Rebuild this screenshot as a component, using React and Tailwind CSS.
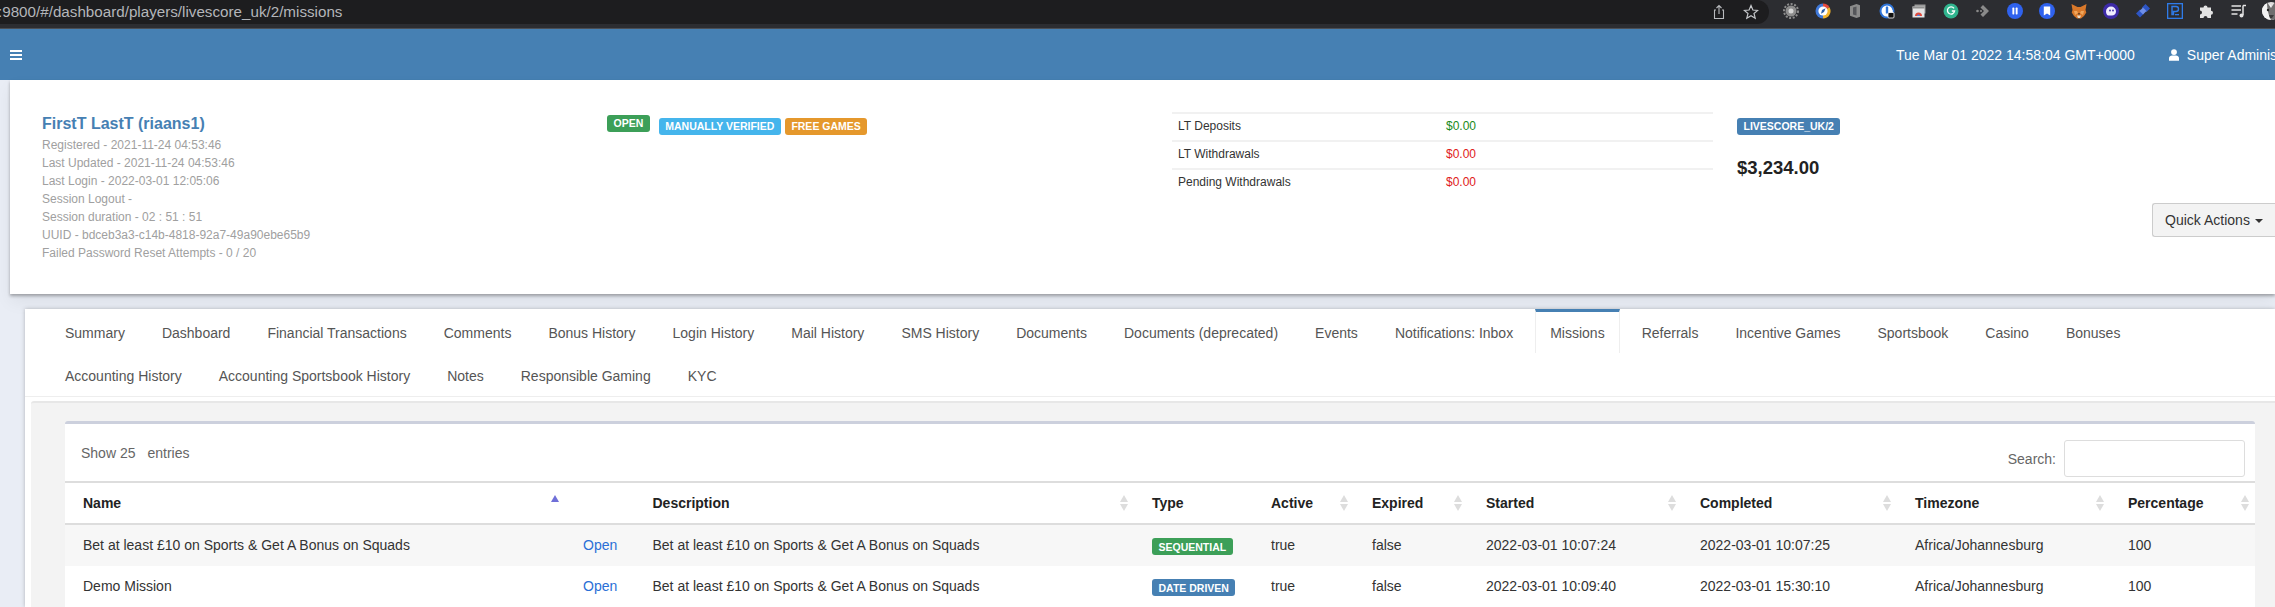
import React from 'react';

const details = [
  'Registered - 2021-11-24 04:53:46',
  'Last Updated - 2021-11-24 04:53:46',
  'Last Login - 2022-03-01 12:05:06',
  'Session Logout -',
  'Session duration - 02 : 51 : 51',
  'UUID - bdceb3a3-c14b-4818-92a7-49a90ebe65b9',
  'Failed Password Reset Attempts - 0 / 20',
];

const tabRows = [
  ['Summary', 'Dashboard', 'Financial Transactions', 'Comments', 'Bonus History', 'Login History', 'Mail History', 'SMS History', 'Documents', 'Documents (deprecated)', 'Events', 'Notifications: Inbox', 'Missions', 'Referrals', 'Incentive Games', 'Sportsbook', 'Casino', 'Bonuses'],
  ['Accounting History', 'Accounting Sportsbook History', 'Notes', 'Responsible Gaming', 'KYC'],
];

const columns = [
  { label: 'Name', width: 'w-[500px]', sort: 'asc' },
  { label: '', width: 'w-[69.5px]' },
  { label: 'Description', width: 'w-[499.5px]', sort: 'both' },
  { label: 'Type', width: 'w-[119px]' },
  { label: 'Active', width: 'w-[101px]', sort: 'both' },
  { label: 'Expired', width: 'w-[114px]', sort: 'both' },
  { label: 'Started', width: 'w-[214px]', sort: 'both' },
  { label: 'Completed', width: 'w-[215px]', sort: 'both' },
  { label: 'Timezone', width: 'w-[213px]', sort: 'both' },
  { label: 'Percentage', width: 'w-[145px]', sort: 'both' },
];

const missions = [
  { name: 'Bet at least £10 on Sports & Get A Bonus on Squads', type: 'SEQUENTIAL', typeColor: 'bg-[#3c9f58]', started: '2022-03-01 10:07:24', completed: '2022-03-01 10:07:25', bg: 'bg-[#f7f7f7]', height: 'h-[42px]' },
  { name: 'Demo Mission', type: 'DATE DRIVEN', typeColor: 'bg-[#4680b3]', started: '2022-03-01 10:09:40', completed: '2022-03-01 15:30:10', bg: 'bg-white', height: 'h-[41px]' },
];

const Label = ({ color, children }) => (
  <span className={`inline-flex h-[17px] items-center rounded-[3px] px-[6.5px] text-[10.5px] font-bold leading-none text-white ${color}`}>
    {children}
  </span>
);

const Icon = ({ children, className = '' }) => (
  <svg viewBox="0 0 16 16" className={`h-4 w-4 shrink-0 ${className}`}>{children}</svg>
);

// Browser toolbar extensions, 32px apart
const ExtensionIcons = () => (
  <div className="flex items-center">
    <div className="flex w-8 justify-center">
      <Icon>
        <circle cx="8" cy="8" r="5.5" fill="#8d8d8d" />
        <circle cx="8" cy="8" r="7" fill="none" stroke="#8d8d8d" strokeWidth="2" strokeDasharray="2 1.6" />
        <circle cx="8" cy="8" r="2.5" fill="#d5d5d5" />
      </Icon>
    </div>
    <div className="flex w-8 justify-center">
      <Icon>
        <path d="M8 0.5a7.5 7.5 0 0 1 6.5 3.75L8 8z" fill="#e34b3f" />
        <path d="M14.5 4.25A7.5 7.5 0 0 1 8 15.5V8z" fill="#f3b52d" />
        <path d="M8 15.5A7.5 7.5 0 0 1 8 0.5V8z" fill="#3f78d8" />
        <circle cx="8" cy="8" r="4.6" fill="#fff" />
        <path d="M10.6 5.2 9 9 6 10.8 7 7z" fill="#2b5fa8" />
      </Icon>
    </div>
    <div className="flex w-8 justify-center">
      <Icon>
        <path d="M3 3.2 9.5 1 13 2.2v11.6L9.5 15 3 12.8z" fill="#8b8b8b" />
        <path d="M6 4.5 9.5 3.5v9L6 11.5z" fill="#55565a" />
      </Icon>
    </div>
    <div className="flex w-8 justify-center">
      <Icon>
        <circle cx="8" cy="8" r="7.5" fill="#2f74d8" />
        <circle cx="8" cy="8" r="5.5" fill="#fff" />
        <rect x="6.8" y="3.5" width="2.4" height="7" rx="0.5" fill="#2f74d8" />
        <rect x="9" y="9.5" width="6" height="5.5" rx="1" fill="#111" stroke="#fff" strokeWidth="0.8" />
        <path d="M10.5 9.5V8.3a1.5 1.5 0 0 1 3 0v1.2" fill="none" stroke="#fff" strokeWidth="0.9" />
      </Icon>
    </div>
    <div className="flex w-8 justify-center">
      <Icon>
        <rect x="3.5" y="1.5" width="11" height="9" fill="#9a9a9a" />
        <rect x="1.5" y="3.5" width="12" height="11" fill="#e4e4e4" />
        <rect x="1.5" y="3.5" width="12" height="2" fill="#8f8f8f" />
        <path d="M4 13a3.5 3.5 0 0 1 7 0z" fill="#e0493c" />
        <path d="M6 13a1.5 1.5 0 0 1 3 0z" fill="#4a85e8" />
      </Icon>
    </div>
    <div className="flex w-8 justify-center">
      <Icon>
        <circle cx="8" cy="8" r="7.5" fill="#30b48e" />
        <path d="M11 5.4A3.6 3.6 0 1 0 11.6 8H8.8" fill="none" stroke="#fff" strokeWidth="1.3" />
      </Icon>
    </div>
    <div className="flex w-8 justify-center">
      <Icon>
        <path d="M8 2 14 8 8 14 5.5 11.5 9 8 5.5 4.5z" fill="#8a8a8a" />
        <circle cx="2.5" cy="8" r="1.3" fill="#8a8a8a" />
        <circle cx="6" cy="8" r="1.1" fill="#8a8a8a" />
      </Icon>
    </div>
    <div className="flex w-8 justify-center">
      <Icon>
        <circle cx="8" cy="8" r="8" fill="#2f62ee" />
        <rect x="5.4" y="4.6" width="1.9" height="6.8" rx="0.6" fill="#fff" />
        <rect x="8.7" y="4.6" width="1.9" height="6.8" rx="0.6" fill="#fff" />
      </Icon>
    </div>
    <div className="flex w-8 justify-center">
      <Icon>
        <circle cx="8" cy="8" r="8" fill="#2f62ee" />
        <path d="M4.8 3.5h6.4v9L8 10.4l-3.2 2.1z" fill="#fff" />
      </Icon>
    </div>
    <div className="flex w-8 justify-center">
      <Icon>
        <path d="M0.5 1 6.5 4h3l6-3-1 6 .8 2.5L13 13l-3 2.5H6L3 13 .7 9.5 1.5 7z" fill="#d9782a" />
        <path d="M3 8h3l1 2-3 2zM13 8h-3l-1 2 3 2z" fill="#efa65c" />
        <path d="M6 12.5h4L9 15H7z" fill="#e9dcc9" />
        <path d="M7 10h2l-1 2.5z" fill="#5b3a21" />
      </Icon>
    </div>
    <div className="flex w-8 justify-center">
      <Icon>
        <circle cx="8" cy="8" r="8" fill="#3d2aa8" />
        <path d="M3 8.5a5 5 0 0 1 10 0c0 2.5-2 4-4 4H5.5C4 12.5 3 10.5 3 8.5z" fill="#f1edff" />
        <circle cx="7" cy="7.5" r="0.9" fill="#3d2aa8" />
        <circle cx="10" cy="7.5" r="0.9" fill="#3d2aa8" />
      </Icon>
    </div>
    <div className="flex w-8 justify-center">
      <Icon>
        <path d="M1 10.5 5 6.5l4 4-4 4z" fill="#2d55c4" />
        <path d="M10.5 1 15 5.5 11.5 9 7 4.5z" fill="#2d55c4" />
        <rect x="5.5" y="5.5" width="5" height="5" transform="rotate(45 8 8)" fill="#6f8fe8" />
      </Icon>
    </div>
    <div className="flex w-8 justify-center">
      <Icon>
        <rect x="0.5" y="0.5" width="15" height="15" fill="none" stroke="#2f7be8" strokeWidth="1.6" />
        <path d="M5 3.5h4a2.5 2.5 0 0 1 0 5H6.5v3H5z" fill="none" stroke="#2f7be8" strokeWidth="1.4" />
        <rect x="8" y="11" width="4" height="1.3" fill="#2f7be8" />
      </Icon>
    </div>
    <div className="flex w-8 justify-center">
      <Icon>
        <path d="M1 4.5h3.500a2 2 0 1 1 4 0H12v3.300a2 2 0 1 1 0 4V15H8.500a2 2 0 1 0-4 0H1v-3.500a2 2 0 1 0 0-4z" fill="#e3e3e3" />
      </Icon>
    </div>
    <div className="flex w-8 justify-center">
      <Icon>
        <path d="M0.5 3h9.500M0.5 7h9.500M0.5 11h6" stroke="#e3e3e3" strokeWidth="1.5" />
        <path d="M12 2.500v9.500" stroke="#e3e3e3" strokeWidth="1.5" />
        <path d="M12 2.500h3" stroke="#e3e3e3" strokeWidth="1.5" />
        <circle cx="10.5" cy="12.5" r="2" fill="#e3e3e3" />
      </Icon>
    </div>
    <div className="ml-[7px] h-[18px] w-[18px] shrink-0 overflow-hidden rounded-full bg-[#dedede]">
      <svg viewBox="0 0 18 18" className="h-full w-full">
        <path d="M0 0 9 3 9 18H0z" fill="#f2f2f2" />
        <path d="M5 0 9 6 13 0v18H9C7 14 5 8 5 0z" fill="#6f6f6f" />
        <circle cx="6" cy="8" r="1.2" fill="#222" />
        <path d="M7 13h5l-2 3H8z" fill="#3a3a3a" />
      </svg>
    </div>
  </div>
);

const SortArrows = ({ sort }) => (
  <span className="absolute right-[6px] top-1/2 flex -translate-y-1/2 flex-col gap-[2px]">
    <span className={`h-0 w-0 border-x-[4px] border-b-[7px] border-x-transparent ${sort === 'asc' ? 'border-b-[#6f6fd8]' : 'border-b-[#dddddd]'}`} />
    <span className={`h-0 w-0 border-x-[4px] border-t-[7px] border-x-transparent ${sort === 'asc' ? 'border-t-transparent' : 'border-t-[#dddddd]'}`} />
  </span>
);

export default function App() {
  return (
    <div className="flex h-[607px] w-[2275px] flex-col overflow-hidden bg-[#e9edf5] font-['Liberation_Sans',Arial,sans-serif] text-sm text-[#333333]">
      {/* Browser chrome */}
      <div className="flex h-[29px] shrink-0 items-start border-b border-[#4b4f55] bg-[#2c2d31]">
        <div className="flex h-6 w-[1769px] shrink-0 items-center justify-between overflow-hidden rounded-r-full bg-[#1d1d1f] pr-[10px]">
          <span className="-ml-[2px] whitespace-nowrap text-[15.2px] text-[#b4b6ba]">:9800/#/dashboard/players/livescore_uk/2/missions</span>
          <div className="flex items-center gap-4">
            <Icon className="text-[#b9bbbe]">
              <path d="M5 6H3.500v8.500h9V6H11M8 10V1.500M5.500 4 8 1.500 10.500 4" fill="none" stroke="currentColor" strokeWidth="1.1" />
            </Icon>
            <Icon className="text-[#c4c6c9]">
              <path d="M8 1.500 9.900 6l4.800.4-3.700 3.100 1.200 4.700L8 11.700l-4.200 2.500L5 9.500 1.300 6.400 6.100 6z" fill="none" stroke="currentColor" strokeWidth="1.2" />
            </Icon>
          </div>
        </div>
        <div className="flex h-[21px] items-center pl-[6px]">
          <ExtensionIcons />
        </div>
      </div>

      {/* App header */}
      <header className="flex h-[51px] shrink-0 items-center bg-[#4680b3] text-white">
        <div className="ml-[10px] flex w-3 shrink-0 flex-col gap-[2px]">
          <span className="h-[2px] bg-white" />
          <span className="h-[2px] bg-white" />
          <span className="h-[2px] bg-white" />
        </div>
        <span className="ml-[1874px] shrink-0 whitespace-nowrap">Tue Mar 01 2022 14:58:04 GMT+0000</span>
        <svg viewBox="0 0 12 14" className="ml-[34px] h-[14px] w-[10px] shrink-0 fill-white">
          <circle cx="6" cy="3.5" r="3.5" />
          <path d="M0 14v-3c0-2.500 2-3.500 3.500-3.500h5C10 7.500 12 8.500 12 11v3z" />
        </svg>
        <span className="ml-[8px] shrink-0 whitespace-nowrap">Super Administrator</span>
      </header>

      {/* Player summary */}
      <section className="ml-[10px] flex h-[214px] shrink-0 bg-white pl-8 pt-8 shadow-[0_2px_3px_rgba(0,0,0,0.3),0_8px_16px_rgba(0,0,0,0.06)]">
        <div className="w-[565px] shrink-0 pt-[1px]">
          <h2 className="text-base font-bold leading-[22px] text-[#4680b3]">FirstT LastT (riaans1)</h2>
          <div className="mt-[1px] text-xs leading-[18px] text-[#a0a0a0]">
            {details.map((line) => (
              <div key={line}>{line}</div>
            ))}
          </div>
        </div>
        <div className="w-[565px] shrink-0 pt-[3px]">
          <div className="flex">
            <Label color="bg-[#3c9f58]">OPEN</Label>
            <span className="ml-[9px]"><Label color="bg-[#45b5ec]">MANUALLY VERIFIED</Label></span>
            <span className="ml-1"><Label color="bg-[#e5982c]">FREE GAMES</Label></span>
          </div>
        </div>
        <div className="w-[541px] shrink-0 text-xs">
          {[
            ['LT Deposits', '$0.00', 'text-[#1a8a1a]'],
            ['LT Withdrawals', '$0.00', 'text-[#e02020]'],
            ['Pending Withdrawals', '$0.00', 'text-[#e02020]'],
          ].map(([label, amount, color]) => (
            <div key={label} className="flex h-7 items-center border-t-2 border-[#f1f1f1] pb-[2px] pl-[6px]">
              <span className="w-[268px]">{label}</span>
              <span className={color}>{amount}</span>
            </div>
          ))}
        </div>
        <div className="ml-6 flex grow flex-col pt-[3px]">
          <div><Label color="bg-[#4680b3]">LIVESCORE_UK/2</Label></div>
          <div className="mt-[22px] text-[18.5px] font-bold leading-[22px] text-[#222222]">$3,234.00</div>
          <button className="ml-auto mt-[24px] flex h-[34px] w-[123px] items-center justify-center gap-[5px] rounded-l-[3px] border border-r-0 border-[#cccccc] bg-[#f3f3f3] text-[#333333]">
            Quick Actions
            <span className="mt-[2px] h-0 w-0 border-x-[4px] border-t-[4px] border-x-transparent border-t-[#333333]" />
          </button>
        </div>
      </section>

      {/* Tabs */}
      <div className="mt-[15px] grow">
        <div className="ml-[25px] flex h-full flex-col bg-white shadow-[0_0_4px_rgba(0,0,0,0.25)]">
          <div className="border-b border-[#eeeeee] px-[25px]">
            {tabRows.map((row, i) => (
              <ul key={i} className={`flex ${i === 0 ? 'h-[44px]' : 'h-[43px]'}`}>
                {row.map((tab) => (
                  <li
                    key={tab}
                    className={
                      tab === 'Missions'
                        ? 'mr-[7px] flex items-center border-x border-t-[3px] border-x-[#eeeeee] border-t-[#4680b3] px-[14px] text-[#555555]'
                        : 'mr-[7px] flex items-center border-t-[3px] border-transparent px-[15px] text-[#555555]'
                    }
                  >
                    {tab}
                  </li>
                ))}
              </ul>
            ))}
          </div>

          {/* Tab content */}
          <div className="ml-[6px] mt-1 grow rounded-tl-[3px] border-t-2 border-[#e7e7e7] bg-[#f3f3f3] pl-[34px] pr-[20px] pt-[18px]">
            <div className="rounded-t-[3px] border-t-[3px] border-[#ccd0dd] bg-white">
              <div className="flex h-[59px] items-start justify-between border-b-2 border-[#dddddd] pl-[16px] pr-[10px]">
                <div className="mt-[19px] text-[#666666]">
                  Show 25<span className="ml-3">entries</span>
                </div>
                <label className="mt-[16px] flex items-center gap-2 text-[#666666]">
                  Search:
                  <input className="h-[37px] w-[181px] rounded-[3px] border border-[#dddddd] bg-white" />
                </label>
              </div>
              <table className="w-full table-fixed border-collapse text-left">
                <thead>
                  <tr className="h-[41px] border-b-2 border-[#dddddd]">
                    {columns.map((col, i) => (
                      <th key={i} className={`relative pl-[18px] font-bold text-[#222222] ${col.width}`}>
                        {col.label}
                        {col.sort && <SortArrows sort={col.sort} />}
                      </th>
                    ))}
                  </tr>
                </thead>
                <tbody>
                  {missions.map((m) => (
                    <tr key={m.name} className={`${m.bg} ${m.height}`}>
                      <td className="pb-[2px] pl-[18px]">{m.name}</td>
                      <td className="pb-[2px] pl-[18px] text-[#2a6fd6]">Open</td>
                      <td className="pb-[2px] pl-[18px]">Bet at least £10 on Sports &amp; Get A Bonus on Squads</td>
                      <td className="pl-[18px]"><Label color={m.typeColor}>{m.type}</Label></td>
                      <td className="pb-[2px] pl-[18px]">true</td>
                      <td className="pb-[2px] pl-[18px]">false</td>
                      <td className="pb-[2px] pl-[18px]">{m.started}</td>
                      <td className="pb-[2px] pl-[18px]">{m.completed}</td>
                      <td className="pb-[2px] pl-[18px]">Africa/Johannesburg</td>
                      <td className="pb-[2px] pl-[18px]">100</td>
                    </tr>
                  ))}
                </tbody>
              </table>
            </div>
          </div>
        </div>
      </div>
    </div>
  );
}
